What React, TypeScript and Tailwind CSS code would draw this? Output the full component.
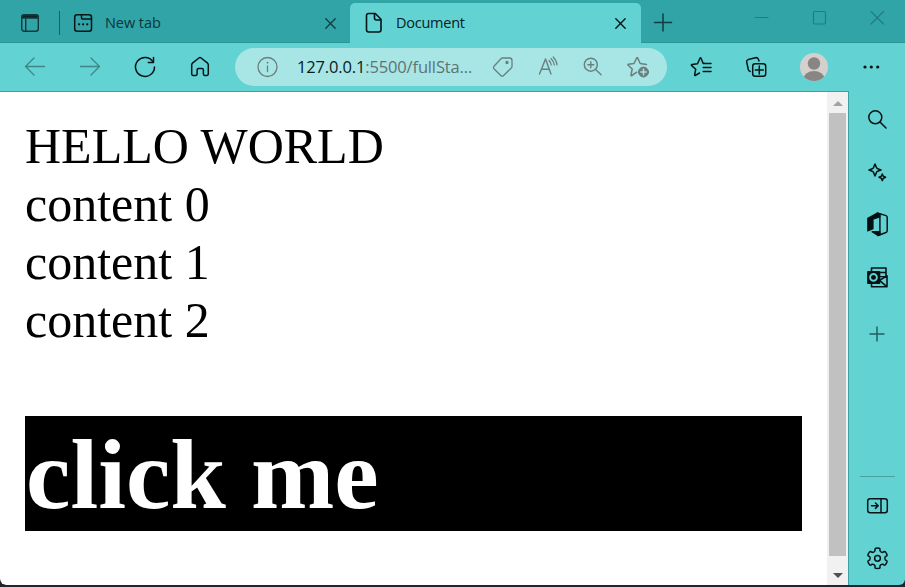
import type { ReactNode } from "react";

type IconProps = { children: ReactNode; color?: string; sw?: number; className?: string };

function Icon({ children, color = "#071517", sw = 1.3, className = "" }: IconProps) {
  return (
    <svg
      width="24"
      height="24"
      viewBox="0 0 24 24"
      fill="none"
      stroke={color}
      strokeWidth={sw}
      strokeLinecap="round"
      strokeLinejoin="round"
      className={`block shrink-0 overflow-visible ${className}`}
    >
      {children}
    </svg>
  );
}

const CloseX = ({ color }: { color: string }) => (
  <Icon color={color} sw={1.4}>
    <path d="M7.8 7.8l9.4 9.4M17.2 7.8l-9.4 9.4" />
  </Icon>
);

function gearPath() {
  const pts: string[] = [];
  for (let i = 0; i < 6; i++) {
    const base = -90 + i * 60;
    const at = (deg: number, r: number) => {
      const a = ((base + deg) * Math.PI) / 180;
      return `${(12.5 + r * Math.cos(a)).toFixed(2)} ${(12.3 + r * Math.sin(a)).toFixed(2)}`;
    };
    pts.push(
      `${i === 0 ? "M" : "L"}${at(-18, 8)}L${at(-15, 9.6)}Q${at(-14, 10.1)} ${at(-9, 10.2)}Q${at(0, 10.3)} ${at(9, 10.2)}Q${at(14, 10.1)} ${at(15, 9.6)}L${at(18, 8)}Q${at(30, 6.6)} ${at(42, 8)}`
    );
  }
  return pts.join("") + "Z";
}

function TitleBar() {
  return (
    <div className="flex h-[43px] border-b border-[#2b9699] bg-[#30a4a7]">
      <div className="flex w-[350px] items-center pt-[3px] pl-[18px]">
        <Icon color="#12393c" sw={1.4}>
          <rect x="3.7" y="3.7" width="16.6" height="16.6" rx="2.5" />
          <path d="M4 7V5.5Q4 4 6 4h12q2 0 2 1.5V7z" fill="#0c2426" />
          <path d="M7.7 8v12" />
        </Icon>
        <div className="ml-[17px] h-6 w-px bg-[#1a5f62]" />
        <Icon className="ml-[11px]" sw={1.5}>
          <rect x="3.7" y="3.7" width="16.8" height="16.6" rx="2.5" />
          <path d="M10.5 4v3q0 1 1 1h9" />
          <path d="M8 13.3h.1M12.1 13.3h.1M16.2 13.3h.1" strokeWidth="2.2" />
        </Icon>
        <span className="ml-[10px] w-[213px] whitespace-nowrap pt-px text-[14.5px] tracking-[-0.05px] text-[#0d3638]">New tab</span>
        <CloseX color="#123f42" />
      </div>
      <div className="mt-[3px] flex h-10 w-[291px] items-center rounded-t-[5px] bg-[#62d2d2] pl-3">
        <Icon sw={1.6}>
          <path d="M6.5 2.5h6.8l5.7 5.7v10.6q0 2.2-2.2 2.2H6.7q-2.2 0-2.2-2.2V4.7q0-2.2 2-2.2z" />
          <path d="M12.5 3v4q0 2 2 2h4" />
        </Icon>
        <span className="ml-[10px] w-[212px] whitespace-nowrap text-[14.5px] leading-[20px] tracking-[-0.25px] text-[#071c1e]">Document</span>
        <CloseX color="#071517" />
      </div>
      <div className="flex grow items-center justify-between pl-[10px] pr-4">
        <Icon color="#123c3f" sw={1.5} className="mt-px">
          <path d="M3.5 12.5h17M12 4v17" />
        </Icon>
        <div className="flex h-full items-start gap-[34px] pt-[6px]">
          <Icon color="#207c80" sw={1.1}>
            <path d="M6 11.5h13" />
          </Icon>
          <Icon color="#207c80" sw={1.1}>
            <rect x="6.5" y="5.5" width="12" height="12.5" rx="1.2" />
          </Icon>
          <Icon color="#207c80" sw={1.1}>
            <path d="M6 5.5L18.5 18M18.5 5.5L6 18" />
          </Icon>
        </div>
      </div>
    </div>
  );
}

const grey = "#6a7f7f";

function AddressBar() {
  return (
    <div className="ml-[23px] flex h-[38px] w-[432px] shrink-0 items-center rounded-full bg-[#a7e6e4] pl-5">
      <Icon color={grey}>
        <circle cx="12.5" cy="12" r="9.5" />
        <path d="M12.5 11v5.5" />
        <path d="M12.5 7.7h.1" strokeWidth="1.8" />
      </Icon>
      <span className="ml-[18px] w-[194px] whitespace-nowrap pt-px text-[16.5px] tracking-[-0.15px] text-[#5f7374]">
        <span className="text-[#071c1e]">127.0.0.1</span>:5500/fullSta...
      </span>
      <div className="flex gap-[21px]">
        <Icon color={grey}>
          <path d="M11.5 3h7q2.5 0 2.5 2.5v6q0 .8-.7 1.5l-7.7 7.5q-1.4 1.3-2.9 0l-6.5-6.500q-1.300-1.500 0-3l6.800-7.200q.7-.8 1.500-.8z" />
          <circle cx="16" cy="7.500" r="1" fill={grey} />
        </Icon>
        <Icon color={grey} sw={1.4}>
          <path d="M3.500 19l6-15L15 19M5.500 14.200h7.800" />
          <path d="M13 5.500q2 2 2.300 4.500M15 3.500q3 3 3.300 6.500M17.200 2q3.500 3.500 3.800 8" strokeWidth="1.2" />
        </Icon>
        <Icon color={grey} sw={1.4}>
          <circle cx="9.8" cy="9.7" r="6.5" />
          <path d="M14.600 14.500l5.500 5.200M6.800 9.700h6M9.800 6.700v6" />
        </Icon>
        <Icon color={grey} sw={1.5}>
          <path d="M10.800 17.200l-5 3.300q-1 .5-.8-.7l1.200-5.800-4-3.700q-.8-.8.3-1l5.500-.8 2.700-5.500q.5-.8 1 0l2.500 5.500 6.300 1" />
          <circle cx="17.5" cy="17" r="5" fill={grey} strokeWidth="1" />
          <path d="M14.800 17h5.400M17.500 14.300v5.400" stroke="#a7e6e4" />
        </Icon>
      </div>
    </div>
  );
}

function Toolbar() {
  return (
    <div className="flex h-12 items-center bg-[#62d2d2] pl-[23px]">
      <div className="flex gap-[31px]">
        <Icon color="#3f8688">
          <path d="M21.500 11.500h-19M11 3l-8.500 8.500L11 20" />
        </Icon>
        <Icon color="#3f8688">
          <path d="M2.500 11.500h19M13 3l8.500 8.500L13 20" />
        </Icon>
        <Icon sw={1.5}>
          <path d="M21.500 12A9.500 9.500 0 1 1 20.300 7.300" />
          <path d="M20.500 2.500v5h-5.200" />
        </Icon>
        <Icon sw={1.5}>
          <path d="M3.700 9.700q0-.8.700-1.500l6.500-5.200q1.100-.9 2.200 0l6.500 5.200q.7.700.7 1.500v9.300q0 1.400-1.400 1.400h-2.200q-1.300 0-1.300-1.400v-4q0-1.500-1.500-1.500h-3.300q-1.500 0-1.500 1.500v4q0 1.400-1.300 1.400H5.100q-1.400 0-1.400-1.400z" />
        </Icon>
      </div>
      <AddressBar />
      <Icon className="ml-[22px]" sw={1.5}>
        <path d="M10.500 18l-4 2.300q-1 .5-.8-.7l1-5.300-4-3.700q-.8-.9.300-1.100l5.500-.8L11 3.200q.5-.8 1 0L14 8l2 .500M14.200 8.500H22M14.200 12.500H22M14.200 16.500H22" />
      </Icon>
      <Icon className="ml-[31px]" sw={1.5}>
        <rect x="8.7" y="8.7" width="13" height="12.5" rx="2.5" />
        <path d="M15.300 11v8M11.300 15h8M6.200 16.500q-1.500-.6-1.900-2L2.700 7.200q-.4-2 1.500-2.600L11.500 2.700q2-.4 2.800 1.300l.7 2" />
      </Icon>
      <svg width="28" height="28" viewBox="0 0 28 28" className="ml-[32px] shrink-0">
        <clipPath id="avatar"><circle cx="14" cy="14" r="14" /></clipPath>
        <g clipPath="url(#avatar)">
          <rect width="28" height="28" fill="#d3d0ce" />
          <circle cx="14" cy="10.5" r="6.2" fill="#898583" />
          <ellipse cx="14" cy="25.5" rx="10.3" ry="7.5" fill="#898583" />
        </g>
      </svg>
      <Icon className="ml-[31px]">
        <g fill="#071517" stroke="none">
          <circle cx="6" cy="12" r="1.6" />
          <circle cx="12.3" cy="12" r="1.6" />
          <circle cx="18.7" cy="12" r="1.6" />
        </g>
      </Icon>
    </div>
  );
}

function Sidebar() {
  return (
    <aside className="flex w-[56px] flex-col items-center bg-[#62d2d2] pt-4">
      <Icon sw={1.5}>
        <circle cx="10.3" cy="10.3" r="6.5" />
        <path d="M15 15l6 6" />
      </Icon>
      <Icon className="mt-[29px]" sw={1.5}>
        <path d="M10 4l1.400 3.400q.4 1 1.300 1.300L16 10l-3.300 1.300q-1 .4-1.300 1.300L10 16l-1.400-3.400q-.4-1-1.300-1.300L4 10l3.300-1.300q1-.4 1.300-1.300z" />
        <path d="M17.300 14l1 2.300 2.300 1-2.300 1-1 2.300-1-2.300-2.300-1 2.300-1z" />
      </Icon>
      <Icon className="mt-[28px]" sw={1.2}>
        <path d="M2.800 6.300L12.300 1l2.500.8v3.100L8 7.300v9.500l-5.200 2.200z" fill="#050e0f" />
        <path d="M12.300 1l8.700 2.600q1.200.4 1.200 1.700v13.500q0 1.300-1.200 1.700L13 23.500" strokeWidth="1.5" />
        <path d="M7 19.700h7.800v3.200l-1.800.6z" fill="#050e0f" />
        <path d="M14.900 2v20.500" strokeWidth="1.5" />
      </Icon>
      <Icon className="mt-[29px]" sw={1.6}>
        <path d="M6.500 6V3H21v8M6.500 18.500v3.200H22v-11l-7.500 4.700 7 6M14.500 7.500H21" />
        <path d="M14.500 11.700h5" strokeWidth="1.2" />
        <rect x="2.9" y="6.7" width="11.6" height="11.6" fill="#050e0f" />
        <circle cx="8.5" cy="12.4" r="3.4" stroke="#62d2d2" strokeWidth="1.9" />
      </Icon>
      <Icon className="mt-[33px]" color="#235f62" sw={1.5}>
        <path d="M5 12h14M12 5v14" />
      </Icon>
      <div className="mt-[130px] h-px w-[35px] bg-[#4a9fa0]" />
      <Icon className="mt-[17px]" sw={1.5}>
        <rect x="2.7" y="4.7" width="19.6" height="14.1" rx="2.5" />
        <path d="M16 5v13.500M6.500 11.700h6.500M10.500 9l2.700 2.700-2.700 2.700" />
      </Icon>
      <Icon className="mt-[28px]" sw={1.5}>
        <path d={gearPath()} />
        <circle cx="12.5" cy="12.3" r="2.9" />
      </Icon>
    </aside>
  );
}

function Page() {
  const lines = ["HELLO WORLD", "content 0", "content 1", "content 2"];
  return (
    <main className="flex w-[849px] overflow-hidden rounded-bl-[6px] border-t border-r border-[#3fa0a2] bg-white">
      <div className="grow pt-[25px] pr-[25px] pl-[25px] font-['Liberation_Serif','Times_New_Roman',serif] text-[50px] leading-[58px] text-black">
        {lines.map((line) => (
          <div key={line}>{line}</div>
        ))}
        <h1 className="mt-[67px] h-[115px] bg-black pl-px text-[100px] leading-[117px] font-bold text-white">click me</h1>
      </div>
      <div className="flex w-[21px] shrink-0 flex-col items-center bg-[#f1f1f1]">
        <div className="flex h-[21px] items-center pt-[2px]">
          <svg width="10" height="5" viewBox="0 0 10 5"><path d="M0 5L5 0l5 5z" fill="#a3a3a3" /></svg>
        </div>
        <div className="h-[443px] w-[17px] bg-[#c1c1c1]" />
        <div className="flex grow items-center pt-[10px]">
          <svg width="10" height="5" viewBox="0 0 10 5"><path d="M0 0L5 5l5-5z" fill="#505050" /></svg>
        </div>
      </div>
    </main>
  );
}

export default function App() {
  return (
    <div className="flex h-[587px] w-[905px] flex-col overflow-hidden bg-[#24242e] font-['Open_Sans','Noto_Sans',sans-serif]">
      <TitleBar />
      <Toolbar />
      <div className="flex h-[494px] overflow-hidden rounded-b-[6px]">
        <Page />
        <Sidebar />
      </div>
    </div>
  );
}
